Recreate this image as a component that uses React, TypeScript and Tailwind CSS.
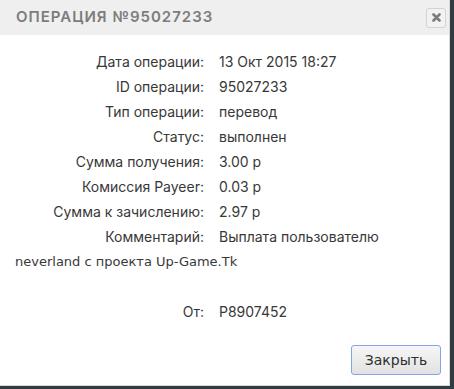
import React from "react";

const rows: [string, string][] = [
  ["Дата операции:", "13 Окт 2015 18:27"],
  ["ID операции:", "95027233"],
  ["Тип операции:", "перевод"],
  ["Статус:", "выполнен"],
  ["Сумма получения:", "3.00 р"],
  ["Комиссия Payeer:", "0.03 р"],
  ["Сумма к зачислению:", "2.97 р"],
];

const geo = { fontFamily: "Inter, 'Open Sans', sans-serif" };
const ui = { fontFamily: "'DejaVu Sans', Verdana, sans-serif" };

function Line({ label, children }: { label: string; children: React.ReactNode }) {
  return (
    <div className="h-[25px] leading-[25px] flex">
      <span className="w-[189px] text-right shrink-0">{label}</span>
      <span className="ml-[15px]">{children}</span>
    </div>
  );
}

export default function App() {
  return (
    <div className="w-[454px] h-[389px] bg-[#2f3c42]">
      <div className="w-[450px] h-[386px] bg-white border-r border-b border-[#d8d8d8] flex flex-col">
        <div className="h-[35px] bg-[#efefef] flex items-center justify-between pl-[16px] pr-[3px]">
          <span
            className="text-[15px] font-semibold tracking-[1px] text-[#7c7c7c]"
            style={geo}
          >
            ОПЕРАЦИЯ №95027233
          </span>
          <button className="w-[20px] h-[20px] rounded-[3px] border border-[#d3d3d3] bg-[#f2f2f2] flex items-center justify-center">
            <svg width="9" height="9" viewBox="0 0 9 9">
              <path d="M1.5 1.5L7.5 7.5M7.5 1.5L1.5 7.5" stroke="#7a7a7a" strokeWidth="2.6" strokeLinecap="round" />
            </svg>
          </button>
        </div>

        <div className="pt-[14px] pl-[15px] text-[14px] text-[#383838]" style={geo}>
          {rows.map(([l, v]) => (
            <Line key={l} label={l}>
              {v}
            </Line>
          ))}
          <Line label="Комментарий:">Выплата пользователю</Line>
          <div className="h-[25px] leading-[25px]" style={ui}>
            <span className="text-[13px]">neverland с проекта Up-Game.Tk</span>
          </div>
          <div className="h-[25px]" />
          <Line label="От:">P8907452</Line>
        </div>

        <div className="mt-auto flex justify-end pr-[8px] pb-[10px]">
          <button
            className="w-[90px] h-[30px] rounded-[3px] border border-[#7fa8e6] bg-gradient-to-b from-[#f6f6f6] to-[#e2e2e2] text-[14px] text-[#2e2e2e]"
            style={ui}
          >
            Закрыть
          </button>
        </div>
      </div>
    </div>
  );
}
